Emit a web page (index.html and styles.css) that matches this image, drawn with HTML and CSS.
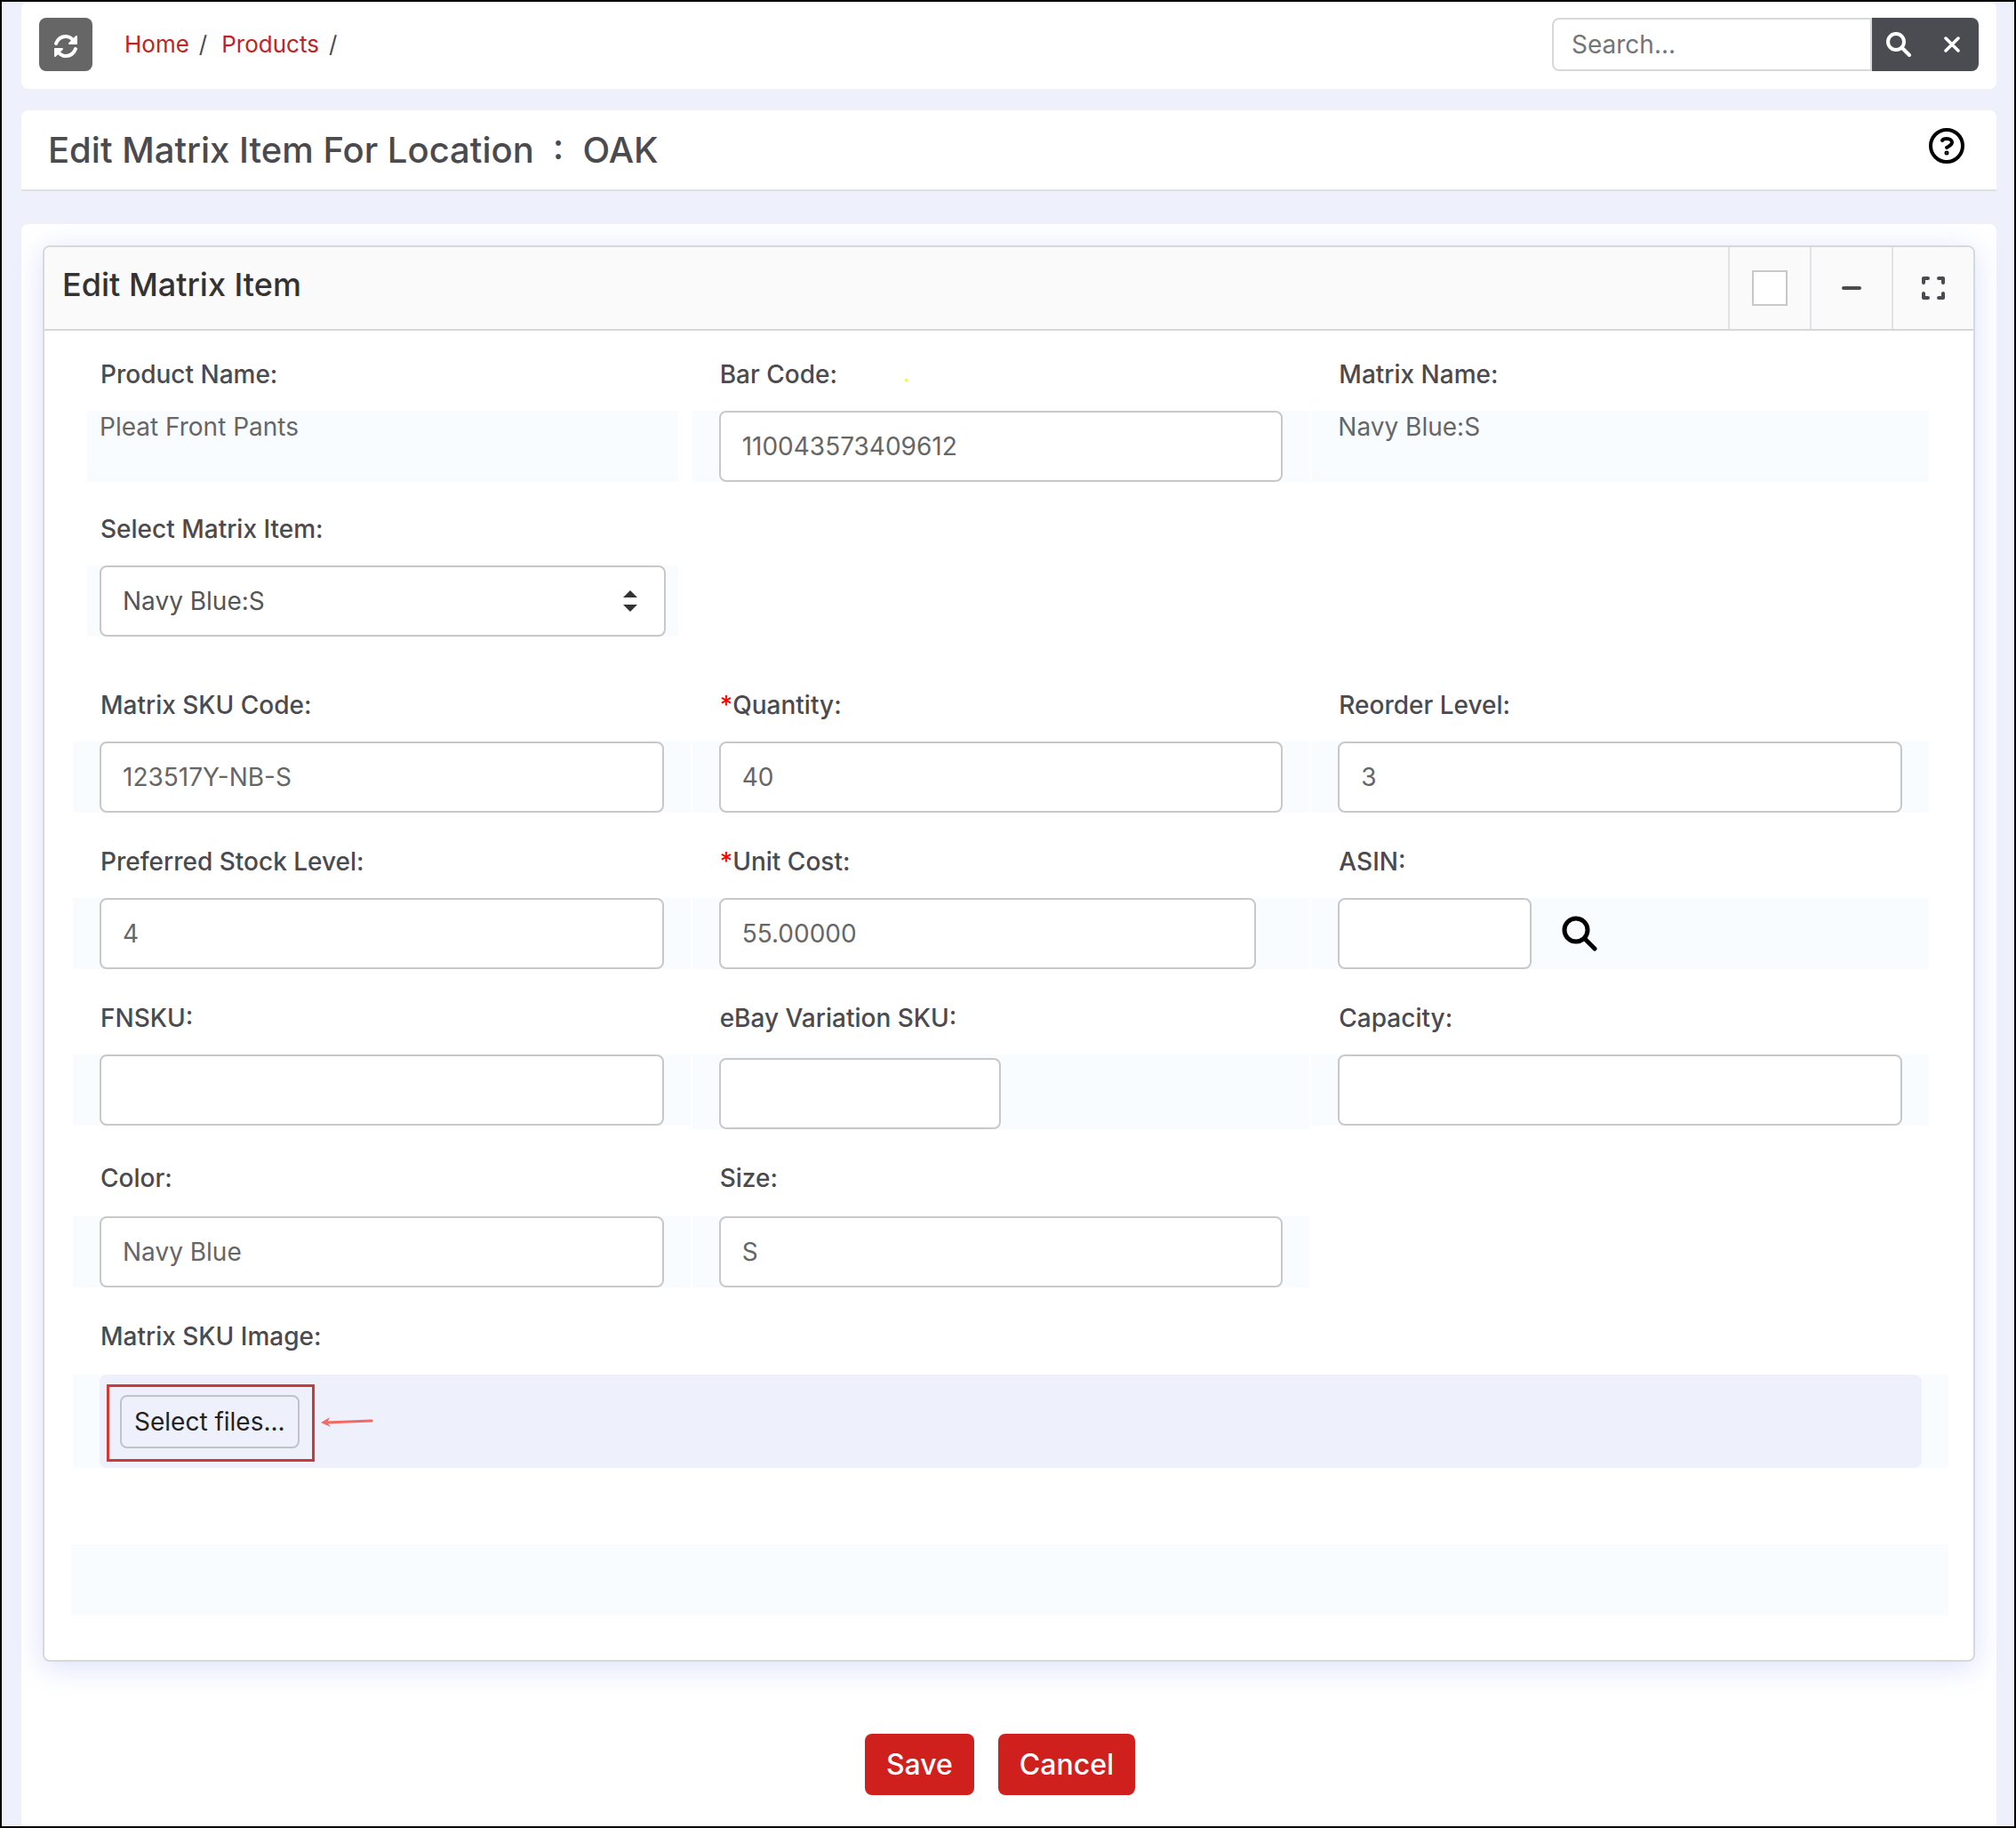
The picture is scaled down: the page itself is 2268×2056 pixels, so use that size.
FILE: index.html
```html
<!DOCTYPE html>
<html lang="en">
<head>
    <meta charset="UTF-8">
    <meta name="viewport" content="width=device-width, initial-scale=1.0">
    <title>Edit Matrix Item</title>
    <link rel="stylesheet" href="styles.css">
</head>
<body>
    <header class="topbar">
        <button class="refresh-btn" type="button" aria-label="Refresh">
            <svg width="28" height="26" viewBox="0 0 28 26" fill="none" stroke="#fff" stroke-width="4" stroke-linecap="round">
                <path d="M3 10C5 5 9 2 14 2c4 0 7 2 10 6"/>
                <path d="M25 16c-2 5-6 8-11 8-4 0-7-2-10-6"/>
                <path d="M26 2v8h-8zM2 24v-8h8z" fill="#fff" stroke-width="2" stroke-linejoin="round"/>
            </svg>
        </button>
        <nav class="breadcrumb">
            <a href="#">Home</a><span>/</span>
            <a href="#">Products</a><span>/</span>
        </nav>
        <form class="search">
            <input class="search-input" type="text" placeholder="Search..." aria-label="Search">
            <button class="search-btn" type="button" aria-label="Search">
                <svg width="28" height="28" viewBox="0 0 28 28" fill="none" stroke="#fff" stroke-width="4" stroke-linecap="round">
                    <circle cx="11" cy="11" r="9"/>
                    <path d="M18 18l8 8"/>
                </svg>
            </button>
            <button class="search-btn" type="button" aria-label="Clear">
                <svg width="18" height="18" viewBox="0 0 18 18" fill="none" stroke="#fff" stroke-width="3.5" stroke-linecap="round">
                    <path d="M2 2l14 14M16 2L2 16"/>
                </svg>
            </button>
        </form>
    </header>

    <div class="page-title">
        <h1>Edit Matrix Item For Location &nbsp;: &nbsp;OAK</h1>
        <button class="help-btn" type="button" aria-label="Help">
            <svg width="40" height="40" viewBox="0 0 40 40" fill="none" stroke="#000" stroke-width="4" stroke-linecap="round" stroke-linejoin="round">
                <circle cx="20" cy="20" r="18"/>
                <path d="M15 14c1-2 3-2 5-2 4 0 6 2 6 4 0 3-3 4-6 6"/>
                <circle cx="20" cy="28" r="1" stroke-width="3"/>
            </svg>
        </button>
    </div>

    <main class="content">
        <section class="panel">
            <div class="panel-header">
                <h2>Edit Matrix Item</h2>
                <label class="panel-tool"><input class="panel-check" type="checkbox" aria-label="Pin panel"></label>
                <button class="panel-tool" type="button" aria-label="Collapse">
                    <svg width="24" height="4" viewBox="0 0 24 4"><rect x="1" width="22" height="4" rx="2" fill="#4a4a4f"/></svg>
                </button>
                <button class="panel-tool" type="button" aria-label="Full screen">
                    <svg width="26" height="26" viewBox="0 0 26 26" fill="none" stroke="#4a4a4f" stroke-width="4" stroke-linecap="round" stroke-linejoin="round">
                        <path d="M2 7V2h5M19 2h5v5M24 19v5h-5M7 24H2v-5"/>
                    </svg>
                </button>
            </div>

            <form class="panel-body">
                <div class="form-row">
                    <div class="field">
                        <span class="field-label">Product Name:</span>
                        <div class="cell cell-inset">Pleat Front Pants</div>
                    </div>
                    <div class="field">
                        <label class="field-label" for="barcode">Bar Code:<span class="dot"></span></label>
                        <div class="cell"><input class="input" id="barcode" type="text" value="110043573409612"></div>
                    </div>
                    <div class="field">
                        <span class="field-label">Matrix Name:</span>
                        <div class="cell">Navy Blue:S</div>
                    </div>
                </div>

                <div class="form-row">
                    <div class="field">
                        <label class="field-label" for="matrixItem">Select Matrix Item:</label>
                        <div class="cell cell-inset">
                            <div class="select-wrap">
                                <select class="input" id="matrixItem">
                                    <option>Navy Blue:S</option>
                                </select>
                                <svg class="select-arrows" width="16" height="24" viewBox="0 0 16 24" fill="#333">
                                    <path d="M8 0l8 8H0zM8 24l8-8H0z"/>
                                </svg>
                            </div>
                        </div>
                    </div>
                </div>

                <div class="form-row form-row-section">
                    <div class="field">
                        <label class="field-label" for="skuCode">Matrix SKU Code:</label>
                        <div class="cell"><input class="input" id="skuCode" type="text" value="123517Y-NB-S"></div>
                    </div>
                    <div class="field">
                        <label class="field-label" for="quantity"><span class="required">*</span>Quantity:</label>
                        <div class="cell"><input class="input" id="quantity" type="text" value="40"></div>
                    </div>
                    <div class="field">
                        <label class="field-label" for="reorder">Reorder Level:</label>
                        <div class="cell"><input class="input" id="reorder" type="text" value="3"></div>
                    </div>
                </div>

                <div class="form-row">
                    <div class="field">
                        <label class="field-label" for="stockLevel">Preferred Stock Level:</label>
                        <div class="cell"><input class="input" id="stockLevel" type="text" value="4"></div>
                    </div>
                    <div class="field">
                        <label class="field-label" for="unitCost"><span class="required">*</span>Unit Cost:</label>
                        <div class="cell cell-cost"><input class="input" id="unitCost" type="text" value="55.00000"></div>
                    </div>
                    <div class="field">
                        <label class="field-label" for="asin">ASIN:</label>
                        <div class="cell cell-lookup">
                            <input class="input input-asin" id="asin" type="text">
                            <button class="lookup-btn" type="button" aria-label="Look up ASIN">
                                <svg width="40" height="40" viewBox="0 0 40 40" fill="none" stroke="#000" stroke-width="5" stroke-linecap="round">
                                    <circle cx="16" cy="16" r="13"/>
                                    <path d="M26 26l11 11"/>
                                </svg>
                            </button>
                        </div>
                    </div>
                </div>

                <div class="form-row">
                    <div class="field">
                        <label class="field-label" for="fnsku">FNSKU:</label>
                        <div class="cell"><input class="input" id="fnsku" type="text"></div>
                    </div>
                    <div class="field">
                        <label class="field-label" for="ebaySku">eBay Variation SKU:</label>
                        <div class="cell cell-ebay"><input class="input input-ebay" id="ebaySku" type="text"></div>
                    </div>
                    <div class="field">
                        <label class="field-label" for="capacity">Capacity:</label>
                        <div class="cell"><input class="input" id="capacity" type="text"></div>
                    </div>
                </div>

                <div class="form-row form-row-loose">
                    <div class="field">
                        <label class="field-label" for="color">Color:</label>
                        <div class="cell"><input class="input" id="color" type="text" value="Navy Blue"></div>
                    </div>
                    <div class="field">
                        <label class="field-label" for="size">Size:</label>
                        <div class="cell"><input class="input" id="size" type="text" value="S"></div>
                    </div>
                </div>

                <div class="form-row-loose form-row-full">
                    <span class="field-label">Matrix SKU Image:</span>
                    <div class="upload-cell">
                        <div class="upload">
                            <div class="highlight">
                                <button class="upload-btn" type="button">Select files...</button>
                            </div>
                            <svg width="60" height="14" viewBox="0 0 60 14" fill="none" stroke="#f26a64" stroke-width="3" stroke-linecap="round">
                                <path d="M7 6l51-2"/>
                                <path d="M1 6l10-6-3 6 4 5z" fill="#f26a64" stroke="none"/>
                            </svg>
                        </div>
                    </div>
                </div>

                <div class="empty-strip"></div>
            </form>
        </section>

        <div class="actions">
            <button class="action-btn" type="button">Save</button>
            <button class="action-btn" type="button">Cancel</button>
        </div>
    </main>
</body>
</html>
```
FILE: styles.css
```css
:root {
    --color-page: #eef0fc;
    --color-cell: #f8fcff;
    --color-border: #d7d8dc;
    --color-input-border: #c8c8c8;
    --color-label: #4a4a4f;
    --color-text: #666;
    --color-red: #d0201e;
}

* {
    margin: 0;
    padding: 0;
    box-sizing: border-box;
}

body {
    display: flex;
    flex-direction: column;
    min-height: 100vh;
    padding: 0 20px 0 22px;
    border: 2px solid #000;
    background-color: var(--color-page);
    color: var(--color-text);
    font-family: Inter, 'Helvetica Neue', Arial, sans-serif;
    font-size: 28px;
    line-height: 36px;
}

button,
input,
select {
    font: inherit;
    color: inherit;
}

button {
    display: flex;
    align-items: center;
    justify-content: center;
    border: none;
    background: none;
    cursor: pointer;
}

/* Top bar */
.topbar {
    display: flex;
    align-items: center;
    padding: 18px 20px 20px;
    margin-bottom: 24px;
    background-color: #fff;
    border-radius: 8px;
}

.refresh-btn {
    width: 60px;
    height: 60px;
    padding-top: 4px;
    background-color: #666;
    border-radius: 8px;
}

.breadcrumb {
    display: flex;
    gap: 16px;
    margin-left: 36px;
    color: var(--color-label);
    font-size: 26px;
}

.breadcrumb a {
    color: #bf2424;
    text-decoration: none;
    margin-right: -5px;
}

.search {
    display: flex;
    margin-left: auto;
}

.search-input {
    width: 360px;
    height: 60px;
    padding: 0 20px;
    border: 2px solid var(--color-border);
    border-radius: 8px 0 0 8px;
    background-color: #fff;
    outline: none;
}

.search-input::placeholder {
    color: #757575;
}

.search-btn {
    width: 60px;
    height: 60px;
    background-color: #4b4c51;
}

.search-btn:last-child {
    border-radius: 0 8px 8px 0;
}

/* Page title */
.page-title {
    display: flex;
    align-items: flex-start;
    justify-content: space-between;
    padding: 20px 36px 20px 30px;
    margin-bottom: 37px;
    background-color: #fff;
    border-bottom: 2px solid #e0e1e5;
    border-radius: 8px 8px 0 0;
}

.page-title h1 {
    color: var(--color-label);
    font-size: 40px;
    font-weight: 500;
    line-height: 49px;
}

.help-btn {
    width: 40px;
    height: 40px;
}

/* Panel */
.content {
    flex: 1;
    padding: 24px 24px 35px;
    background-color: #fff;
    border-radius: 8px 8px 0 0;
}

.panel {
    border: 2px solid var(--color-border);
    border-radius: 8px;
    background-color: #fff;
    box-shadow: 0 6px 32px rgba(90, 115, 235, 0.22);
}

.panel-header {
    display: flex;
    height: 94px;
    border-bottom: 2px solid var(--color-border);
    border-radius: 6px 6px 0 0;
    background-color: #fafafa;
}

.panel-header h2 {
    flex: 1;
    padding: 18px 20px;
    color: #333;
    font-size: 36px;
    font-weight: 500;
    line-height: 48px;
}

.panel-tool {
    display: flex;
    align-items: center;
    justify-content: center;
    width: 92px;
    border-left: 2px solid #e2e2e4;
}

.panel-check {
    appearance: none;
    width: 40px;
    height: 40px;
    border: 2px solid var(--color-input-border);
    background-color: #fff;
}

.panel-body {
    padding: 29px 48px 50px 32px;
}

/* Form grid */
.form-row {
    display: grid;
    grid-template-columns: repeat(3, 1fr);
    align-items: start;
    margin-bottom: 33px;
}

.form-row-section {
    margin-top: 57px;
}

.form-row-section,
.form-row-section ~ .form-row {
    margin-bottom: 35px;
}

.field-label {
    display: flex;
    align-items: center;
    height: 40px;
    margin: 0 30px 21px 31px;
    color: var(--color-label);
    font-weight: 500;
}

.form-row-loose .field-label {
    margin-bottom: 23px;
}

.required {
    color: #f00;
}

.dot {
    width: 3px;
    height: 3px;
    margin: 12px 0 0 76px;
    background-color: #f3f06a;
}

.cell {
    min-height: 80px;
    padding: 0 30px;
    margin-right: 2px;
    background-color: var(--color-cell);
}

.cell-inset {
    padding: 0 14px;
    margin: 0 16px;
}

.cell-cost {
    padding-right: 60px;
}

.cell-ebay {
    padding-top: 4px;
}

.cell-lookup {
    display: flex;
    align-items: center;
    gap: 34px;
}

.input {
    display: block;
    width: 100%;
    height: 80px;
    padding: 0 24px;
    border: 2px solid var(--color-input-border);
    border-radius: 8px;
    background-color: #fff;
    outline: none;
}

.input-asin {
    width: 218px;
}

.input-ebay {
    width: 50%;
}

.lookup-btn {
    width: 40px;
    height: 40px;
}

.select-wrap {
    position: relative;
}

.select-wrap .input {
    appearance: none;
    color: #555;
}

.select-arrows {
    position: absolute;
    top: 28px;
    right: 32px;
    pointer-events: none;
}

/* Image upload */
.form-row-full {
    margin-right: -20px;
}

.upload-cell {
    padding: 0 30px;
    background-color: var(--color-cell);
}

.upload {
    display: flex;
    align-items: center;
    gap: 6px;
    padding: 11px 8px 7px;
    border-radius: 8px;
    background-color: var(--color-page);
}

.highlight {
    padding: 9px 14px 12px 12px;
    border: 3px solid #cc3a35;
}

.upload-btn {
    height: 60px;
    padding: 0 14px;
    border: 2px solid #c2c2c8;
    border-radius: 8px;
    color: #222;
}

.empty-strip {
    height: 80px;
    margin: 86px -20px 0 -2px;
    background-color: var(--color-cell);
}

/* Save / Cancel */
.actions {
    display: flex;
    justify-content: center;
    gap: 27px;
    padding-right: 20px;
    margin-top: 81px;
}

.action-btn {
    height: 69px;
    padding: 0 24px;
    border-radius: 8px;
    background-color: var(--color-red);
    color: #fff;
    font-size: 32px;
    font-weight: 500;
}
```
